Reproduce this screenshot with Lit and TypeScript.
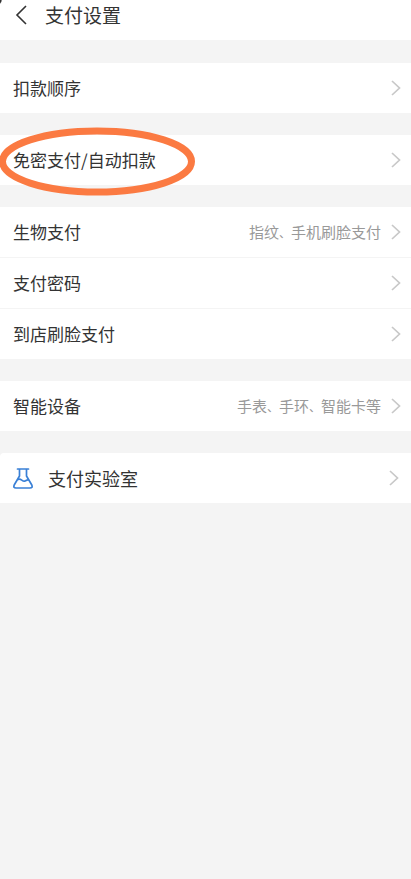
import { LitElement, html, svg, css, nothing } from "lit";
import { customElement, property } from "lit/decorators.js";

interface Item {
  label: string;
  note?: string;
  marked?: boolean;
  icon?: boolean;
}

const GROUPS: Item[][] = [
  [{ label: "扣款顺序" }],
  [{ label: "免密支付/自动扣款", marked: true }],
  [
    { label: "生物支付", note: "指纹、手机刷脸支付" },
    { label: "支付密码" },
    { label: "到店刷脸支付" },
  ],
  [{ label: "智能设备", note: "手表、手环、智能卡等" }],
  [{ label: "支付实验室", icon: true }],
];

const flask = svg`
  <path d="M4.5 1H15.5M6.5 1V8L1.2 17Q0 20 3 20H17Q20 20 18.8 17L13.5 8V1" />
  <path d="M5.2 11.4C8 10 9 13.6 11.5 13.2C13 13 13.4 11.6 15.2 11.8" />
`;

@customElement("settings-row")
export class SettingsRow extends LitElement {
  @property({ attribute: false }) item!: Item;

  static styles = css`
    :host {
      display: block;
      position: relative;
    }
    .row {
      display: flex;
      align-items: center;
      box-sizing: border-box;
      width: 100%;
      min-height: 50px;
      padding: 0 10px 0 13px;
      border: 0;
      background: #fff;
      color: #333;
      font: inherit;
      font-size: 17px;
      line-height: 24px;
      text-align: left;
      cursor: pointer;
    }
    .featured {
      padding-right: 12px;
      border-top-left-radius: 4px;
      font-size: 18px;
    }
    .label {
      flex: 1;
      white-space: nowrap;
    }
    .note {
      color: #999;
      font-size: 15px;
      margin-right: 10px;
      white-space: nowrap;
    }
    .comma {
      font-size: 12px;
    }
    .chevron {
      flex: none;
      width: 10px;
      height: 16px;
      fill: none;
      stroke: #c8c8c8;
      stroke-width: 1.7;
    }
    .flask {
      flex: none;
      width: 20px;
      height: 21px;
      margin-right: 15px;
      fill: none;
      stroke: #3a80d6;
      stroke-width: 1.7;
      stroke-linecap: round;
      stroke-linejoin: round;
    }
    .ring {
      position: absolute;
      left: -3px;
      top: -9px;
      width: 200px;
      height: 70px;
      fill: none;
      stroke: #fb7a42;
      stroke-width: 7;
      pointer-events: none;
      z-index: 1;
    }
  `;

  private renderNote(note: string) {
    return html`<span class="note"
      >${note
        .split("、")
        .map((part, i) => (i ? html`<span class="comma">、</span>${part}` : part))}</span
    >`;
  }

  render() {
    const { label, note, marked, icon } = this.item;
    return html`
      <button class="row ${icon ? "featured" : ""}" type="button">
        ${icon
          ? html`<svg class="flask" viewBox="0 0 20 21" aria-hidden="true">${flask}</svg>`
          : nothing}
        <span class="label">${label}</span>
        ${note ? this.renderNote(note) : nothing}
        <svg class="chevron" viewBox="0 0 10 16" aria-hidden="true">
          <path d="M1 1L8.5 8L1 15" />
        </svg>
      </button>
      ${marked
        ? html`<svg class="ring" viewBox="0 0 200 70" aria-hidden="true">
            <ellipse cx="100" cy="35.5" rx="94.5" ry="30.5" />
          </svg>`
        : nothing}
    `;
  }
}

@customElement("app-root")
export class AppRoot extends LitElement {
  static styles = css`
    :host {
      display: block;
      min-height: 100vh;
      overflow: hidden;
      background: #f4f4f4;
      font-family: "Noto Sans CJK SC", sans-serif;
    }
    .bar {
      display: flex;
      align-items: center;
      gap: 18px;
      padding: 0 14px 10px;
      background: radial-gradient(2px 4px at 0 0, #333 60%, transparent) #fff;
      color: #333;
    }
    .back {
      display: flex;
      padding: 0;
      border: 0;
      background: none;
      cursor: pointer;
    }
    .arrow {
      width: 13px;
      height: 20px;
      fill: none;
      stroke: #333;
      stroke-width: 1.6;
    }
    .title {
      margin: 0;
      font-size: 19px;
      font-weight: 400;
      line-height: 30px;
    }
    .groups {
      display: flex;
      flex-direction: column;
      gap: 22px;
      padding-top: 23px;
    }
    .group {
      display: flex;
      flex-direction: column;
      gap: 1px;
    }
  `;

  render() {
    return html`
      <header class="bar">
        <button class="back" type="button" aria-label="返回">
          <svg class="arrow" viewBox="0 0 13 20" aria-hidden="true">
            <path d="M12 1L3 10L12 19" />
          </svg>
        </button>
        <h1 class="title">支付设置</h1>
      </header>
      <main class="groups">
        ${GROUPS.map(
          (group) => html`<section class="group">
            ${group.map((item) => html`<settings-row .item=${item}></settings-row>`)}
          </section>`,
        )}
      </main>
    `;
  }
}
